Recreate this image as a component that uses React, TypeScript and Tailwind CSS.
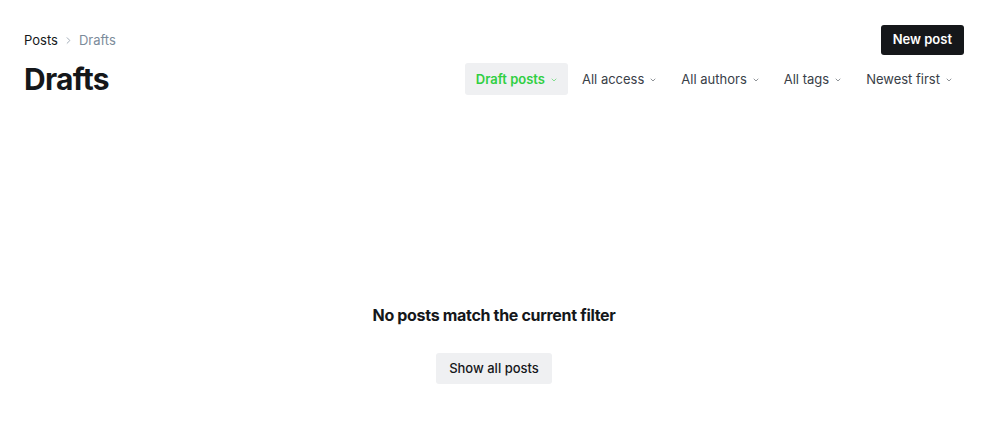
import { ChevronDown, ChevronRight } from "lucide-react";

const filters = [
  { label: "Draft posts", active: true },
  { label: "All access", active: false },
  { label: "All authors", active: false },
  { label: "All tags", active: false },
  { label: "Newest first", active: false },
];

export default function App() {
  return (
    <div
      className="min-h-screen bg-white text-[#15171a] flex flex-col"
      style={{ fontFamily: "Inter, 'Noto Sans', sans-serif" }}
    >
      <header className="pl-6 pr-9 pt-[25px]">
        <div className="flex items-start justify-between">
          <nav className="flex items-center gap-[5px] text-[13px] leading-none pt-[9px]">
            <span className="text-[#15171a]">Posts</span>
            <ChevronRight className="h-[11px] w-[11px] text-[#9aa5b1]" strokeWidth={2} />
            <span className="text-[#7c8b9a]">Drafts</span>
          </nav>
          <button className="h-[30px] px-[12px] rounded-[3px] bg-[#15171a] text-white text-[13px] font-semibold">
            New post
          </button>
        </div>
        <div className="flex items-center justify-between mt-2">
          <h1 className="text-[30px] font-bold tracking-tight leading-none">Drafts</h1>
          <div className="flex items-center gap-[4px] mr-[1px]">
            {filters.map((f) => (
              <button
                key={f.label}
                className={
                  f.active
                    ? "h-8 pl-[11px] pr-[10px] pt-px flex items-center gap-[5px] rounded-[3px] bg-[#eff0f2] text-[#30cf43] text-[13px] font-semibold"
                    : "h-8 px-[10px] pt-px flex items-center gap-[5px] rounded-[3px] text-[#394047] text-[13px]"
                }
              >
                {f.label}
                <ChevronDown className="h-[8px] w-[8px] opacity-70" strokeWidth={2.4} />
              </button>
            ))}
          </div>
        </div>
      </header>

      <main className="flex-1 pl-6 pr-9 flex flex-col items-center pt-[212px]">
        <h2 className="text-[16px] font-bold tracking-[-0.02em] leading-none">
          No posts match the current filter
        </h2>
        <button className="mt-[30px] h-[31px] px-[13px] rounded-[3px] bg-[#eff0f2] text-[13px] font-medium text-[#15171a]">
          Show all posts
        </button>
      </main>
    </div>
  );
}
